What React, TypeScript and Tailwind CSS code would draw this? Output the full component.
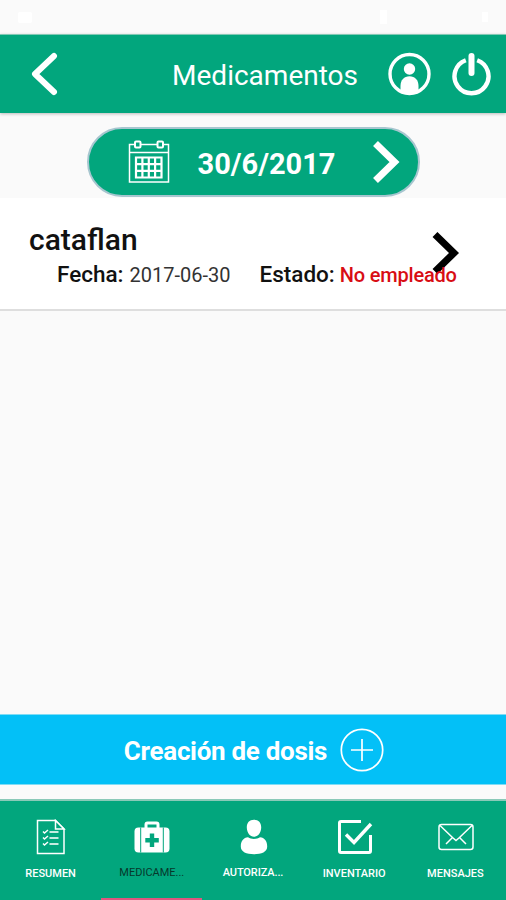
import type { ReactNode } from "react"

type Tab = {
  label: string
  icon: ReactNode
  active?: boolean
  labelClass: string
}

const ReportIcon = () => (
  <svg width="30" height="36" viewBox="0 0 30 36" fill="none" stroke="white" strokeWidth="1.5">
    <path d="M1.500 1.500h18l8.500 8.500v24.500H1.500z" />
    <path d="M19.500 1.500V10H28z" fill="#02a67d" />
    <path d="M7 12.500l1.500 1.500 3.500-3M7 18.500l1.500 1.500 3.500-3M7 24.500l1.500 1.500 3.500-3" />
    <path d="M13.500 13h9M13.500 19h9M13.500 25h9" stroke="#c5ebe0" strokeWidth="2" />
  </svg>
)

const KitIcon = () => (
  <svg width="36" height="32" viewBox="0 0 36 32">
    <path d="M12 7V3.500a1.500 1.500 0 0 1 1.500-1.500h9a1.500 1.500 0 0 1 1.500 1.500V7" fill="none" stroke="white" strokeWidth="3" />
    <rect x=".5" y="6.500" width="35" height="25" rx="4" fill="white" />
    <path d="M6.700 6.500v25M29.300 6.500v25" stroke="#02a67d" strokeWidth="1" />
    <path d="M18 12.500v13.500M11.300 19.200h13.500" stroke="#02a67d" strokeWidth="4.400" />
  </svg>
)

const PersonIcon = () => (
  <svg width="28" height="36" viewBox="0 0 28 36" fill="white">
    <path d="M14 .8c4.800 0 7.400 3.300 7.200 8-.2 5-3.200 9-7.200 9s-7-4-7.200-9C6.600 4.100 9.200.8 14 .8z" />
    <path d="M8 18.300c1.800 1.200 3.500 1.700 6 1.700s4.200-.5 6-1.700c4.500.3 7.200 4 7.200 9.200 0 5.500-5.700 7.700-13.200 7.700S.8 33 .8 27.500c0-5.200 2.700-8.900 7.200-9.200z" />
  </svg>
)

const CheckIcon = () => (
  <svg width="36" height="36" viewBox="0 0 36 36" fill="none" stroke="white" strokeWidth="3">
    <path d="M24 2.500H4A1.500 1.500 0 0 0 2.500 4v28A1.500 1.500 0 0 0 4 33.500h28a1.500 1.500 0 0 0 1.500-1.500V16" />
    <path d="M9 15.500l8 8L34 5" strokeWidth="3.400" />
  </svg>
)

const MailIcon = () => (
  <svg width="36" height="28" viewBox="0 0 36 28" fill="none" stroke="white" strokeWidth="1.500">
    <rect x="1" y="1.500" width="34" height="25" rx="2.500" />
    <path d="M2 2.500l12.500 12L18 17.500l3.500-3L34 2.500M8 21l6.500-6.500M28 21l-6.500-6.500" />
  </svg>
)

const tabs: Tab[] = [
  { label: "RESUMEN", icon: <ReportIcon />, labelClass: "font-medium text-white" },
  { label: "MEDICAME...", icon: <KitIcon />, active: true, labelClass: "text-[#07382c] -translate-y-px" },
  { label: "AUTORIZA...", icon: <PersonIcon />, labelClass: "font-medium text-white -translate-y-px tracking-[-0.1px]" },
  { label: "INVENTARIO", icon: <CheckIcon />, labelClass: "font-medium text-white" },
  { label: "MENSAJES", icon: <MailIcon />, labelClass: "font-medium text-white" },
]

// white system icons, barely visible on the light status bar
const StatusBar = () => (
  <div className="flex h-[34px] shrink-0 items-center pr-[18px] pl-[18px]">
    <span className="h-[11px] w-[14px] rounded-xs bg-white" />
    <span className="ml-auto h-[14px] w-[7px] bg-white" />
    <span className="ml-[95px] h-[10px] w-[6px] bg-white" />
  </div>
)

const Header = () => (
  <header className="flex h-[79px] items-center border-t border-[#82c9b5] bg-[#02a67d] pr-[14px] pl-[31px] text-white shadow-[0_1px_3px_rgba(0,0,0,0.25)]">
    <svg width="27" height="44" viewBox="0 0 27 44" fill="none" stroke="white" strokeWidth="6" strokeLinecap="round" strokeLinejoin="round">
      <path d="M23 4L4 22l19 18" />
    </svg>
    <h1 className="mt-[3px] ml-auto text-[28px] leading-8">Medicamentos</h1>
    <svg className="ml-[30px]" width="43" height="44" viewBox="0 0 43 44">
      <circle cx="21.500" cy="22" r="19.500" fill="none" stroke="white" strokeWidth="3.400" />
      <circle cx="21.500" cy="17" r="5.700" fill="white" />
      <path d="M12.500 39V34c0-6 3.500-9.800 9-9.800s9 3.800 9 9.800v5c-5 3-13 3-18 0z" fill="white" />
    </svg>
    <svg className="ml-[20px]" width="41" height="46" viewBox="0 0 41 46" fill="none" stroke="white">
      <path d="M14.800 9.200A17 17 0 1 0 26.200 9.200" strokeWidth="4.400" />
      <path d="M20.500 5v17" strokeWidth="6" strokeLinecap="round" />
    </svg>
  </header>
)

const DatePicker = () => (
  <div className="flex h-[85px] justify-center pt-[14px]">
    <button className="flex h-[70px] w-[333px] items-center rounded-full border-2 border-[#a7c6cf] bg-[#02a67d] pr-[18px] pl-[39px] text-white">
      <svg width="42" height="44" viewBox="0 0 42 44" fill="none" stroke="white" strokeWidth="1.500">
        <path d="M6 4.500H1.500v37.500h39V4.500H36M13 4.500h16M1.500 12.500h39" />
        <rect x="7" y="1.500" width="5.500" height="6" rx="1" strokeWidth="2" />
        <rect x="29.500" y="1.500" width="5.500" height="6" rx="1" strokeWidth="2" />
        <path d="M8 17.500h25.500v20H8zM14.400 17.500v20M20.800 17.500v20M27.100 17.500v20M8 24.200h25.500M8 30.800h25.500" strokeWidth="2.200" />
      </svg>
      <span className="mt-[4px] ml-[28px] text-[29px] leading-9 font-bold">30/6/2017</span>
      <svg className="ml-auto" width="28" height="44" viewBox="0 0 28 44" fill="none" stroke="white" strokeWidth="7">
        <path d="M3.500 3.500L22.500 22 3.500 40.500" />
      </svg>
    </button>
  </div>
)

const MedicineItem = () => (
  <div className="relative h-[113px] border-b-2 border-[#dedede] bg-white pt-[25px] pl-[29px] text-[#111]">
    <svg className="absolute top-[33px] left-[431px]" width="29" height="44" viewBox="0 0 29 44" fill="none" stroke="black" strokeWidth="7">
      <path d="M4 3.500L23 22 4 40.500" />
    </svg>
    <h2 className="text-[30px] leading-[34px] font-medium">cataflan</h2>
    <div className="relative ml-[28px] flex items-baseline text-[22.500px] leading-[34px] whitespace-nowrap">
      <span className="font-medium">Fecha:</span>
      <span className="ml-[6px] text-[20px] text-[#333]">2017-06-30</span>
      <span className="ml-[29px] font-medium">Estado:</span>
      <span className="ml-[5px] text-[20px] font-medium tracking-[-0.2px] text-[#d80d14]">No empleado</span>
    </div>
  </div>
)

const App = () => {
  return (
    <div className="flex h-[900px] w-[506px] flex-col overflow-hidden bg-[#fafafa] font-['Roboto',sans-serif]">
      <StatusBar />
      <Header />
      <DatePicker />
      <MedicineItem />

      <button className="mt-auto flex h-[71px] items-center justify-center border-y border-[#7fdcf5] bg-[#03c0f7] pl-[2px] text-white">
        <span className="mt-[3px] text-[26px] font-bold tracking-[-0.3px]">Creación de dosis</span>
        <svg className="ml-[13px]" width="44" height="44" viewBox="0 0 44 44" fill="none" stroke="white" strokeWidth="1.700">
          <circle cx="22" cy="22" r="20.700" />
          <path d="M22 11v22M11 22h22" />
        </svg>
      </button>

      <nav className="mt-[14px] flex h-[101px] border-t-2 border-[#8ac9b8] bg-[#02a67d]">
        {tabs.map((tab) => (
          <div
            key={tab.label}
            className={`flex flex-1 flex-col items-center border-b-2 ${
              tab.active ? "border-[#e0567f]" : "border-transparent"
            }`}
          >
            <div className="mt-[17px] flex h-[38px] items-center pl-px">{tab.icon}</div>
            <span className={`mt-[9.500px] text-[11px] leading-4 ${tab.labelClass}`}>{tab.label}</span>
          </div>
        ))}
      </nav>
    </div>
  )
}

export default App
